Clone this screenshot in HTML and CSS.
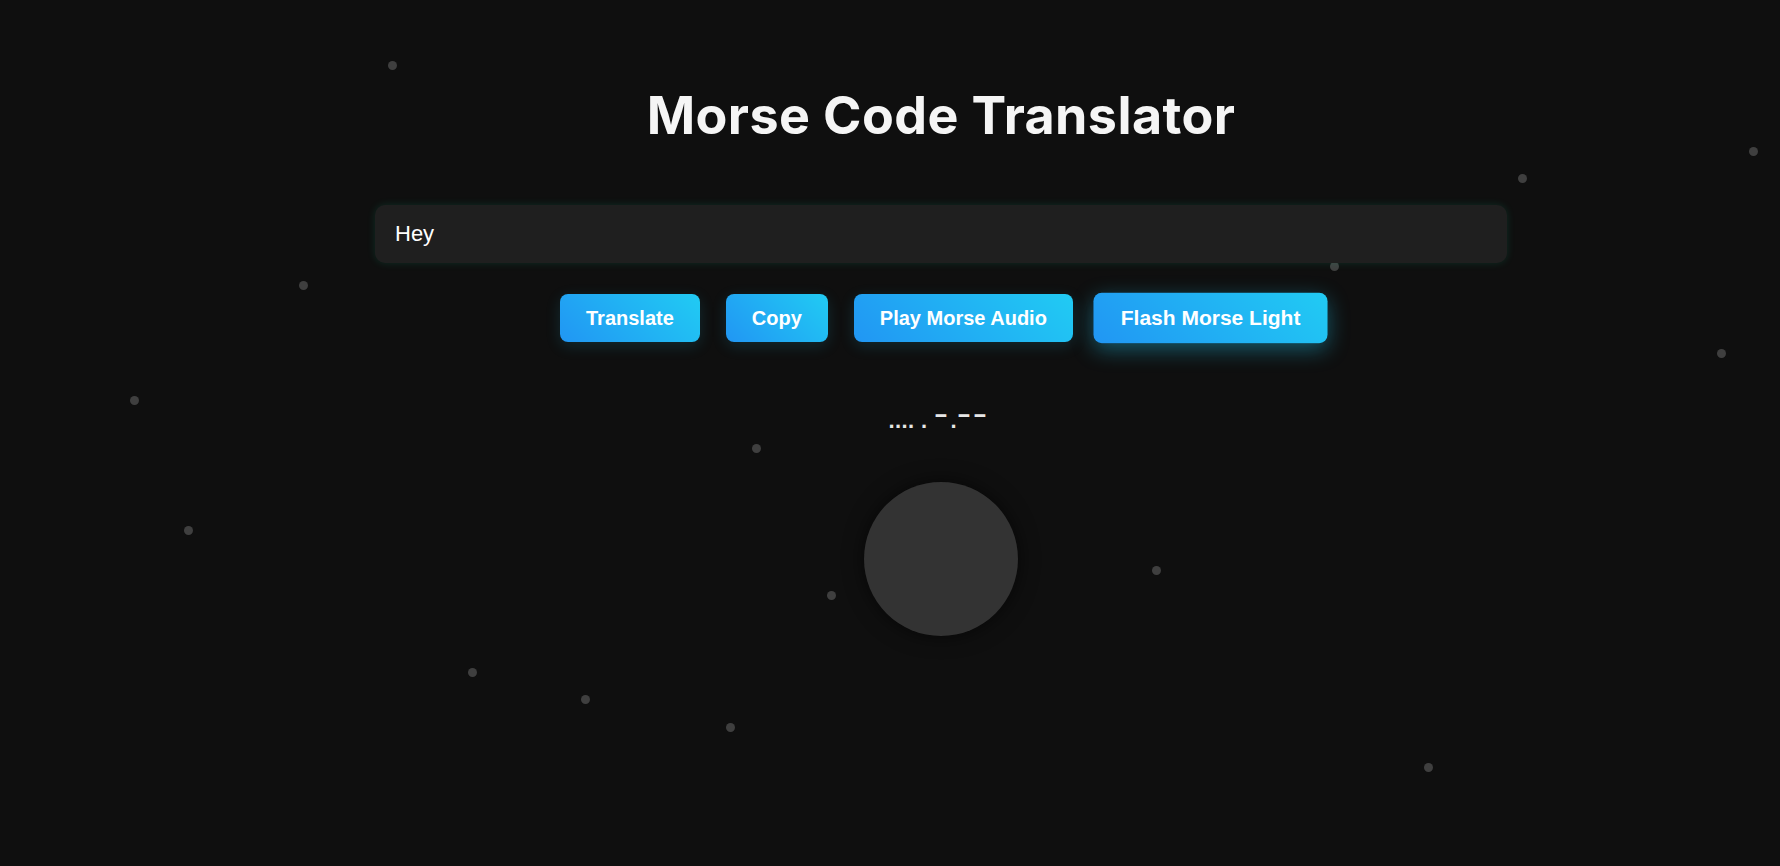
FILE: index.html
```html
<!DOCTYPE html>
<html lang="en">
<head>
<meta charset="utf-8">
<title>Morse Code Translator</title>
<link rel="stylesheet" href="styles.css">
</head>
<body>
<div class="particles">
  <span class="particle" style="left:388px;top:61px"></span>
  <span class="particle" style="left:1749px;top:147px"></span>
  <span class="particle" style="left:1518px;top:174px"></span>
  <span class="particle" style="left:299px;top:281px"></span>
  <span class="particle" style="left:1330px;top:262px"></span>
  <span class="particle" style="left:1717px;top:349px"></span>
  <span class="particle" style="left:130px;top:396px"></span>
  <span class="particle" style="left:752px;top:444px"></span>
  <span class="particle" style="left:184px;top:526px"></span>
  <span class="particle" style="left:827px;top:591px"></span>
  <span class="particle" style="left:1152px;top:566px"></span>
  <span class="particle" style="left:468px;top:668px"></span>
  <span class="particle" style="left:581px;top:695px"></span>
  <span class="particle" style="left:726px;top:723px"></span>
  <span class="particle" style="left:1424px;top:763px"></span>
</div>
<main class="app">
  <h1 class="title">Morse Code Translator</h1>
  <input class="text-input" type="text" value="Hey">
  <div class="actions">
    <button class="btn">Translate</button>
    <button class="btn">Copy</button>
    <button class="btn">Play Morse Audio</button>
    <button class="btn btn-hover">Flash Morse Light</button>
  </div>
  <div class="morse">.... . <span class="d">-</span>.<span class="d">-</span><span class="d">-</span></div>
  <div class="light"></div>
</main>
</body>
</html>
```
FILE: styles.css
```css
html, body {
  margin: 0;
  padding: 0;
  height: 100%;
  background: #0f0f0f;
  overflow: hidden;
}

body {
  font-family: "Liberation Sans", Arial, sans-serif;
  color: #fff;
  position: relative;
}

.particles {
  position: absolute;
  inset: 0;
  pointer-events: none;
}

.particle {
  position: absolute;
  width: 9px;
  height: 9px;
  border-radius: 50%;
  background: #3f3f3f;
}

.app {
  position: relative;
  display: flex;
  flex-direction: column;
  align-items: center;
  padding-left: 102px;
  padding-top: 84px;
}

.title {
  margin: 0;
  font-family: Inter, "Open Sans", sans-serif;
  font-weight: 700;
  font-size: 52px;
  line-height: 64px;
  letter-spacing: 0.4px;
  color: #f5f5f5;
}

.text-input {
  margin-top: 57px;
  width: 1132px;
  height: 58px;
  box-sizing: border-box;
  padding: 0 20px;
  border: none;
  outline: none;
  border-radius: 10px;
  background: #1f1f1f;
  color: #fff;
  font-family: "Liberation Sans", Arial, sans-serif;
  font-size: 22px;
  box-shadow: 0 0 8px rgba(0, 255, 180, 0.12);
}

.actions {
  margin-top: 31px;
  display: flex;
  gap: 26px;
}

.btn {
  height: 48px;
  padding: 0 26px;
  border: none;
  border-radius: 8px;
  background: linear-gradient(45deg, #2196f3, #21cbf3);
  color: #fff;
  font-family: "Liberation Sans", Arial, sans-serif;
  font-weight: 700;
  font-size: 20px;
  box-shadow: 0 4px 15px rgba(33, 203, 243, 0.15);
}

.btn-hover {
  transform: scale(1.05);
  box-shadow: 0 6px 20px rgba(33, 203, 243, 0.4);
}

.morse {
  margin-top: 65px;
  margin-right: 4px;
  font-size: 22px;
  font-weight: 700;
  line-height: 28px;
  letter-spacing: 0.4px;
  color: #e6e6e6;
  white-space: pre;
}

.morse .d {
  display: inline-block;
  width: 16.3px;
  transform: translateY(-7px) scaleX(1.9);
  transform-origin: 0 50%;
}

.light {
  margin-top: 47px;
  width: 154px;
  height: 154px;
  border-radius: 50%;
  background: #333;
  box-shadow: 0 0 20px rgba(0, 0, 0, 0.6);
}
```
